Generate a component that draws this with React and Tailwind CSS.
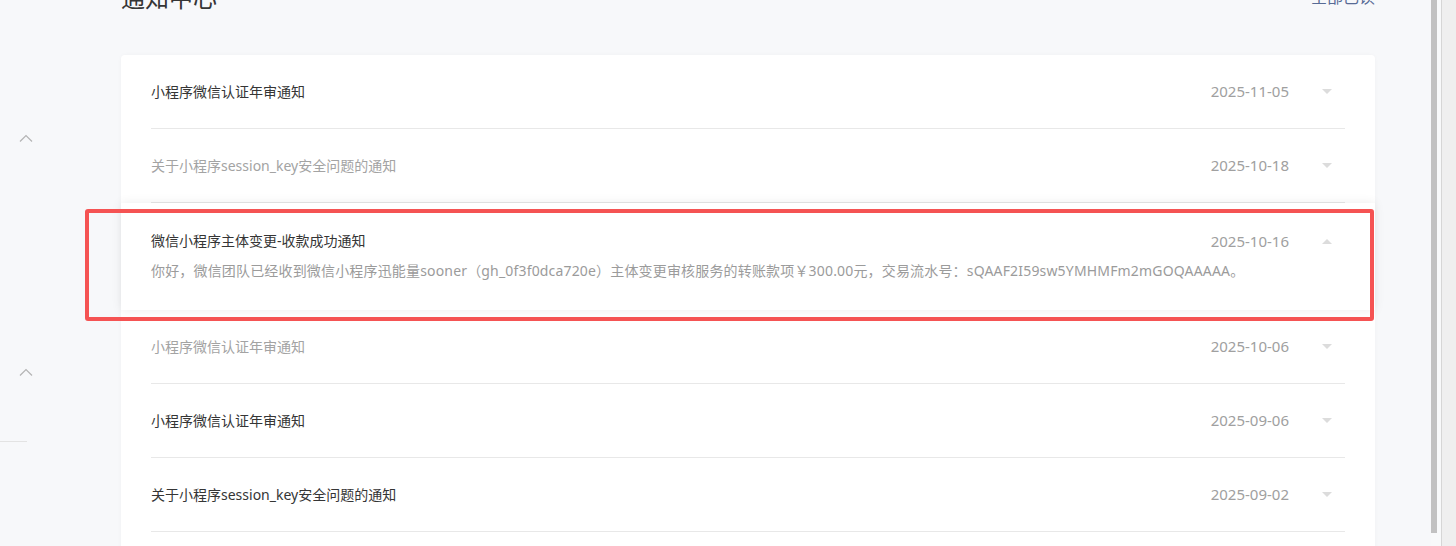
import React from 'react';

const notices = [
  { title: '小程序微信认证年审通知', date: '2025-11-05', read: false },
  { title: '关于小程序session_key安全问题的通知', date: '2025-10-18', read: true },
  {
    title: '微信小程序主体变更-收款成功通知',
    date: '2025-10-16',
    read: false,
    open: true,
    body: '你好，微信团队已经收到微信小程序迅能量sooner（gh_0f3f0dca720e）主体变更审核服务的转账款项￥300.00元，交易流水号：sQAAF2I59sw5YMHMFm2mGOQAAAAA。',
  },
  { title: '小程序微信认证年审通知', date: '2025-10-06', read: true },
  { title: '小程序微信认证年审通知', date: '2025-09-06', read: false },
  { title: '关于小程序session_key安全问题的通知', date: '2025-09-02', read: false },
];

function Caret({ up }) {
  return (
    <svg width="10" height="5" viewBox="0 0 10 5" className="shrink-0">
      <path d={up ? 'M0 5 L5 0 L10 5 Z' : 'M0 0 L10 0 L5 5 Z'} fill="#dcdcdc" />
    </svg>
  );
}

function SideChevron() {
  return (
    <svg width="14" height="8" viewBox="0 0 14 8" className="ml-[19px]">
      <polyline points="1,7.5 7,1.5 13,7.5" fill="none" stroke="#b4b4b4" strokeWidth="1.2" />
    </svg>
  );
}

function Row({ item }) {
  if (item.open) {
    return (
      <div className="relative z-10 bg-white shadow-[0_0_10px_rgba(0,0,0,0.08)] px-[30px] pt-7 pb-[29px]">
        <div className="flex items-center h-5">
          <div className="flex-1 text-[14px] leading-5 text-[#353535]">{item.title}</div>
          <div className="text-[15px] text-[#a0a0a0]">{item.date}</div>
          <div className="ml-[33px] mr-[13px]">
            <Caret up />
          </div>
        </div>
        <div className="mt-[10px] text-[14px] leading-5 tracking-[0.012em] text-[#9b9b9b]">{item.body}</div>
      </div>
    );
  }
  return (
    <div className="px-[30px]">
      <div className="h-[74px] flex items-center border-b border-[#e8e8e8]">
        <div className={`flex-1 text-[14px] ${item.read ? 'text-[#a3a3a3]' : 'text-[#353535]'}`}>
          {item.title}
        </div>
        <div className="text-[15px] text-[#a0a0a0]">{item.date}</div>
        <div className="ml-[33px] mr-[13px]">
          <Caret />
        </div>
      </div>
    </div>
  );
}

export default function App() {
  return (
    <div
      className="w-[1456px] h-[546px] flex overflow-hidden bg-[#f7f8fa]"
      style={{ fontFamily: '"Noto Sans", "Noto Sans CJK SC", sans-serif' }}
    >
      {/* page */}
      <div className="relative w-[1431px] h-full flex overflow-hidden">
        {/* sidebar */}
        <div className="w-[121px] shrink-0 pt-[134px]">
          <SideChevron />
          <div className="mt-[226px]">
            <SideChevron />
          </div>
          <div className="mt-[65px] w-[27px] border-t border-[#e3e3e3]" />
        </div>

        {/* content */}
        <div className="w-[1254px] shrink-0 -mt-[19px]">
          <div className="h-8 flex items-center justify-between">
            <h1 className="text-[24px] leading-8 text-[#353535]" style={{ fontFamily: '"Noto Sans CJK SC", sans-serif' }}>
              通知中心
            </h1>
            <a className="text-[16px] text-[#576b95]">全部已读</a>
          </div>
          <div className="mt-[42px] bg-white rounded-[4px] shadow-[0_0_4px_rgba(0,0,0,0.03)] pb-[60px]">
            {notices.map((n, i) => (
              <Row key={i} item={n} />
            ))}
          </div>
        </div>

        {/* annotation box */}
        <div className="absolute z-20 left-[85px] top-[209px] w-[1289px] h-[112px] border-4 border-[#f55353] rounded-[3px] pointer-events-none" />
      </div>

      {/* scrollbar */}
      <div className="w-[10px] shrink-0 flex bg-[#f8f9fa]">
        <div className="w-[6px] h-[533px] bg-[#c1c1c1]" />
      </div>
      <div className="w-px shrink-0 bg-[#d6d6d6]" />
      <div className="flex-1 bg-[#efefef]" />
    </div>
  );
}
